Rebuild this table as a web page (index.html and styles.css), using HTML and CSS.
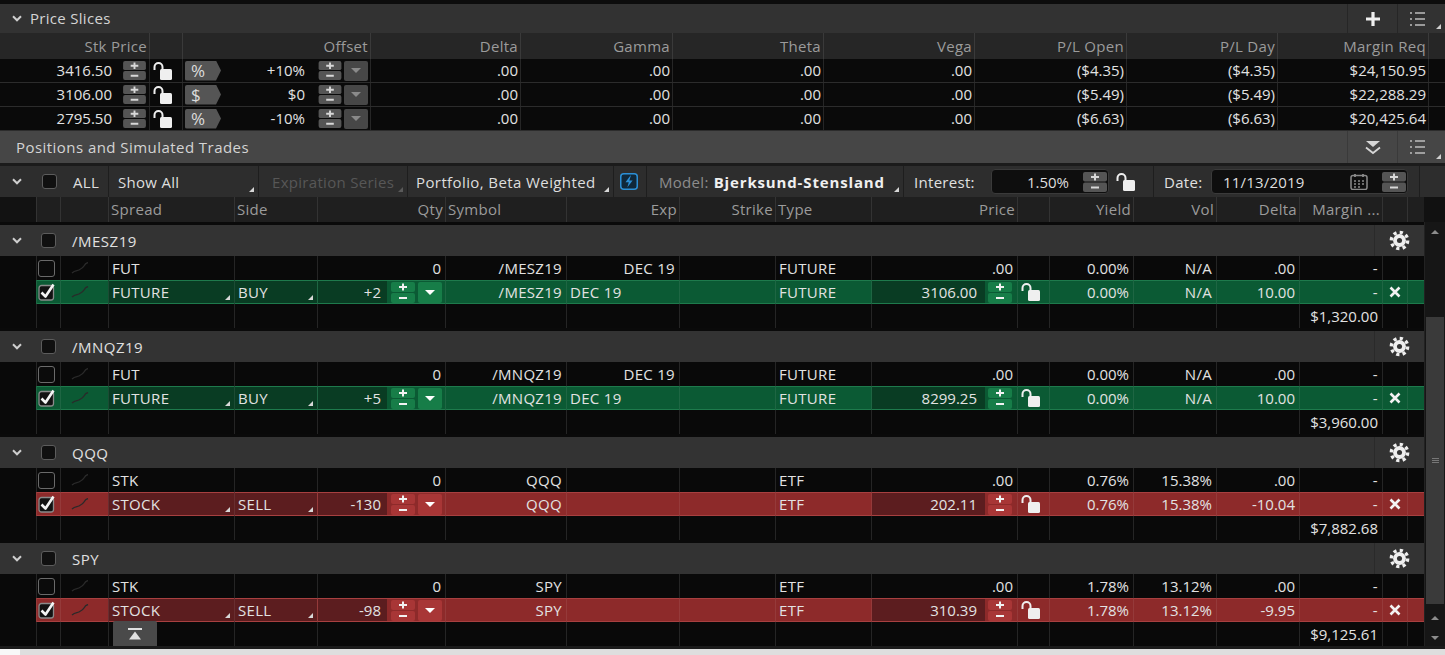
FILE: index.html
```html
<!DOCTYPE html>
<html>
<head>
<meta charset="utf-8">
<title>Price Slices</title>
<link rel="stylesheet" href="styles.css">
</head>
<body>
<div class="app">
  <div class="topband"></div>

  <div class="phead ps-head">
    <span class="chev"><svg width="10" height="7" viewBox="0 0 10 7"><path d="M1 1.3L5 5.3L9 1.3" /></svg></span>
    <span class="ptitle">Price Slices</span>
    <span class="tool plus"><svg width="18" height="18" viewBox="0 0 18 18"><path d="M9 2v14M2 9h14"/></svg></span>
    <span class="tool menu"><svg width="18" height="16" viewBox="0 0 18 16"><path d="M1 2h2M6 2h10M1 8h2M6 8h10M1 14h2M6 14h10"/></svg></span>
  </div>

  <div class="ps-grid">
    <div class="ps-row ps-hdr">
      <div class="pc r">Stk Price</div><div class="pc"></div><div class="pc r">Offset</div><div class="pc r">Delta</div><div class="pc r">Gamma</div><div class="pc r">Theta</div><div class="pc r">Vega</div><div class="pc r">P/L Open</div><div class="pc r">P/L Day</div><div class="pc r">Margin Req</div><div class="pc"></div>
    </div>
    <div class="ps-row">
      <div class="pc stk"><span class="v">3416.50</span><svg class="spin g" width="23" height="19" viewBox="0 0 24 20"><rect class="sb" x="0" y="0" width="24" height="9.5" rx="2"/><rect class="sb" x="0" y="10.5" width="24" height="9.5" rx="2"/><path class="sg" d="M8 5h8M12 1.5v7M8 15.5h8"/></svg></div>
      <div class="pc lockc"><svg class="lock" width="20" height="18" viewBox="0 0 20 18"><path d="M1.5 8V5A4 4 0 0 1 9.5 5V8"/><rect x="7" y="7" width="12" height="11" rx="1.5"/></svg></div>
      <div class="pc off"><span class="tag">%</span><span class="v">+10%</span><svg class="spin g" width="24" height="19" viewBox="0 0 24 20"><rect class="sb" x="0" y="0" width="24" height="9.5" rx="2"/><rect class="sb" x="0" y="10.5" width="24" height="9.5" rx="2"/><path class="sg" d="M8 5h8M12 1.5v7M8 15.5h8"/></svg><span class="dd g"></span></div>
      <div class="pc r">.00</div><div class="pc r">.00</div><div class="pc r">.00</div><div class="pc r">.00</div><div class="pc r">($4.35)</div><div class="pc r">($4.35)</div><div class="pc r">$24,150.95</div><div class="pc"></div>
    </div>
    <div class="ps-row">
      <div class="pc stk"><span class="v">3106.00</span><svg class="spin g" width="23" height="19" viewBox="0 0 24 20"><rect class="sb" x="0" y="0" width="24" height="9.5" rx="2"/><rect class="sb" x="0" y="10.5" width="24" height="9.5" rx="2"/><path class="sg" d="M8 5h8M12 1.5v7M8 15.5h8"/></svg></div>
      <div class="pc lockc"><svg class="lock" width="20" height="18" viewBox="0 0 20 18"><path d="M1.5 8V5A4 4 0 0 1 9.5 5V8"/><rect x="7" y="7" width="12" height="11" rx="1.5"/></svg></div>
      <div class="pc off"><span class="tag">$</span><span class="v">$0</span><svg class="spin g" width="24" height="19" viewBox="0 0 24 20"><rect class="sb" x="0" y="0" width="24" height="9.5" rx="2"/><rect class="sb" x="0" y="10.5" width="24" height="9.5" rx="2"/><path class="sg" d="M8 5h8M12 1.5v7M8 15.5h8"/></svg><span class="dd g"></span></div>
      <div class="pc r">.00</div><div class="pc r">.00</div><div class="pc r">.00</div><div class="pc r">.00</div><div class="pc r">($5.49)</div><div class="pc r">($5.49)</div><div class="pc r">$22,288.29</div><div class="pc"></div>
    </div>
    <div class="ps-row">
      <div class="pc stk"><span class="v">2795.50</span><svg class="spin g" width="23" height="19" viewBox="0 0 24 20"><rect class="sb" x="0" y="0" width="24" height="9.5" rx="2"/><rect class="sb" x="0" y="10.5" width="24" height="9.5" rx="2"/><path class="sg" d="M8 5h8M12 1.5v7M8 15.5h8"/></svg></div>
      <div class="pc lockc"><svg class="lock" width="20" height="18" viewBox="0 0 20 18"><path d="M1.5 8V5A4 4 0 0 1 9.5 5V8"/><rect x="7" y="7" width="12" height="11" rx="1.5"/></svg></div>
      <div class="pc off"><span class="tag">%</span><span class="v">-10%</span><svg class="spin g" width="24" height="19" viewBox="0 0 24 20"><rect class="sb" x="0" y="0" width="24" height="9.5" rx="2"/><rect class="sb" x="0" y="10.5" width="24" height="9.5" rx="2"/><path class="sg" d="M8 5h8M12 1.5v7M8 15.5h8"/></svg><span class="dd g"></span></div>
      <div class="pc r">.00</div><div class="pc r">.00</div><div class="pc r">.00</div><div class="pc r">.00</div><div class="pc r">($6.63)</div><div class="pc r">($6.63)</div><div class="pc r">$20,425.64</div><div class="pc"></div>
    </div>
  </div>

  <div class="phead pos-head">
    <span class="ptitle">Positions and Simulated Trades</span>
    <span class="tool collapse"><svg width="18" height="16" viewBox="0 0 18 16"><path class="f" d="M2 2H16L9 8Z"/><path class="s" d="M2 8.5L9 14L16 8.5"/></svg></span>
    <span class="tool menu"><svg width="18" height="16" viewBox="0 0 18 16"><path d="M1 2h2M6 2h10M1 8h2M6 8h10M1 14h2M6 14h10"/></svg></span>
  </div>

  <div class="toolbar">
    <div class="tb tb-sel">
      <span class="chev"><svg width="10" height="7" viewBox="0 0 10 7"><path d="M1 1.3L5 5.3L9 1.3" /></svg></span>
      <span class="cb"></span>
      <span class="tb-all">ALL</span>
    </div>
    <div class="tb tb-show drop">Show All</div>
    <div class="tb tb-exp drop dis">Expiration Series</div>
    <div class="tb tb-port drop">Portfolio, Beta Weighted</div>
    <div class="tb tb-bolt"><svg width="18" height="17" viewBox="0 0 18 17"><rect x="0.75" y="0.75" width="16.5" height="15.5" rx="3"/><path d="M10.5 2.5L5.5 9.3H8.8L7.3 14.5L12.6 7.4H9.3L10.9 2.5Z"/></svg></div>
    <div class="tb tb-model drop"><span class="lbl">Model:</span><b>Bjerksund-Stensland</b></div>
    <div class="tb tb-int">
      <span class="lbl2 li">Interest:</span>
      <span class="inp int-inp"><span class="iv">1.50%</span><svg class="spin g" width="24" height="20" viewBox="0 0 24 20"><rect class="sb" x="0" y="0" width="24" height="9.5" rx="2"/><rect class="sb" x="0" y="10.5" width="24" height="9.5" rx="2"/><path class="sg" d="M8 5h8M12 1.5v7M8 15.5h8"/></svg></span>
      <svg class="lock" width="20" height="18" viewBox="0 0 20 18"><path d="M1.5 8V5A4 4 0 0 1 9.5 5V8"/><rect x="7" y="7" width="12" height="11" rx="1.5"/></svg>
    </div>
    <div class="tb tb-date">
      <span class="lbl2 ld">Date:</span>
      <span class="inp date-inp"><span class="dv">11/13/2019</span><svg class="cal" width="18" height="17" viewBox="0 0 18 17"><rect x="1" y="2.5" width="16" height="14" rx="2"/><path class="ring" d="M5 1v3M13 1v3"/><path class="grid" d="M4 8h2M8 8h2M12 8h2M4 11h2M8 11h2M12 11h2M4 14h2M8 14h2"/></svg><svg class="spin g" width="24" height="20" viewBox="0 0 24 20"><rect class="sb" x="0" y="0" width="24" height="9.5" rx="2"/><rect class="sb" x="0" y="10.5" width="24" height="9.5" rx="2"/><path class="sg" d="M8 5h8M12 1.5v7M8 15.5h8"/></svg></span>
    </div>
    <div class="tb tb-rest"></div>
  </div>

  <div class="pos-body">
    <div class="pos-main">
      <div class="row hdr">
        <div class="c c0"></div><div class="c"></div><div class="c"></div><div class="c">Spread</div><div class="c">Side</div><div class="c r">Qty</div><div class="c">Symbol</div><div class="c r">Exp</div><div class="c r">Strike</div><div class="c">Type</div><div class="c r">Price</div><div class="c"></div><div class="c r">Yield</div><div class="c r">Vol</div><div class="c r">Delta</div><div class="c r">Margin ...</div><div class="c"></div><div class="c"></div>
      </div>

      <!-- /MESZ19 -->
      <div class="grp">
        <div class="ghead">
          <span class="chev"><svg width="10" height="7" viewBox="0 0 10 7"><path d="M1 1.3L5 5.3L9 1.3" /></svg></span>
          <span class="cb"></span><span class="gname">/MESZ19</span>
          <span class="gear"><svg width="21" height="21" viewBox="0 0 20 20"><circle class="teeth" cx="10" cy="10" r="7.8"/><circle class="body" cx="10" cy="10" r="6.1"/><circle class="hole" cx="10" cy="10" r="2.4"/></svg></span>
        </div>
        <div class="row">
          <div class="c c0"></div><div class="c cbc"><span class="cb lg"></span></div><div class="c chart"><svg width="18" height="12" viewBox="0 0 18 12"><path d="M1 11C4 8 6 9 8 8S12 6 13 4S15 1 17 0.5"/></svg></div>
          <div class="c">FUT</div><div class="c"></div><div class="c r n">0</div><div class="c r">/MESZ19</div><div class="c r">DEC 19</div><div class="c"></div><div class="c">FUTURE</div><div class="c r n">.00</div><div class="c"></div><div class="c r n">0.00%</div><div class="c r">N/A</div><div class="c r n">.00</div><div class="c r">-</div><div class="c"></div><div class="c"></div>
        </div>
        <div class="row trade buy">
          <div class="c c0"></div><div class="c cbc"><svg class="chk" width="18" height="18" viewBox="0 0 18 18"><rect x="1" y="2.5" width="14.5" height="14.5" rx="2.5"/><path d="M3.5 9.5L7.5 13.5L15.5 1.5"/></svg></div><div class="c chart"><svg width="18" height="12" viewBox="0 0 18 12"><path d="M1 11C4 8 6 9 8 8S12 6 13 4S15 1 17 0.5"/></svg></div>
          <div class="c ed drop">FUTURE</div><div class="c ed drop">BUY</div>
          <div class="c qty n"><span class="fld">+2</span><svg class="spin" width="24" height="21" viewBox="0 0 24 21"><rect class="sb" x="0" y="0" width="24" height="10" rx="2"/><rect class="sb" x="0" y="11" width="24" height="10" rx="2"/><path class="sg" d="M8 5h8M12 1.5v7M8 16h8"/></svg><span class="dd"></span></div>
          <div class="c r">/MESZ19</div><div class="c">DEC 19</div><div class="c"></div><div class="c">FUTURE</div>
          <div class="c price n"><span class="fld">3106.00</span><svg class="spin" width="24" height="21" viewBox="0 0 24 21"><rect class="sb" x="0" y="0" width="24" height="10" rx="2"/><rect class="sb" x="0" y="11" width="24" height="10" rx="2"/><path class="sg" d="M8 5h8M12 1.5v7M8 16h8"/></svg></div>
          <div class="c lockc"><svg class="lock" width="20" height="18" viewBox="0 0 20 18"><path d="M1.5 8V5A4 4 0 0 1 9.5 5V8"/><rect x="7" y="7" width="12" height="11" rx="1.5"/></svg></div>
          <div class="c r n">0.00%</div><div class="c r">N/A</div><div class="c r n">10.00</div><div class="c r">-</div>
          <div class="c xc"><svg width="12" height="12" viewBox="0 0 12 12"><path d="M1.5 1.5L10.5 10.5M10.5 1.5L1.5 10.5"/></svg></div><div class="c"></div>
        </div>
        <div class="row">
          <div class="c c0"></div><div class="c"></div><div class="c"></div><div class="c"></div><div class="c"></div><div class="c"></div><div class="c"></div><div class="c"></div><div class="c"></div><div class="c"></div><div class="c"></div><div class="c"></div><div class="c"></div><div class="c"></div><div class="c"></div><div class="c r n">$1,320.00</div><div class="c"></div><div class="c"></div>
        </div>
      </div>

      <!-- /MNQZ19 -->
      <div class="grp">
        <div class="ghead">
          <span class="chev"><svg width="10" height="7" viewBox="0 0 10 7"><path d="M1 1.3L5 5.3L9 1.3" /></svg></span>
          <span class="cb"></span><span class="gname">/MNQZ19</span>
          <span class="gear"><svg width="21" height="21" viewBox="0 0 20 20"><circle class="teeth" cx="10" cy="10" r="7.8"/><circle class="body" cx="10" cy="10" r="6.1"/><circle class="hole" cx="10" cy="10" r="2.4"/></svg></span>
        </div>
        <div class="row">
          <div class="c c0"></div><div class="c cbc"><span class="cb lg"></span></div><div class="c chart"><svg width="18" height="12" viewBox="0 0 18 12"><path d="M1 11C4 8 6 9 8 8S12 6 13 4S15 1 17 0.5"/></svg></div>
          <div class="c">FUT</div><div class="c"></div><div class="c r n">0</div><div class="c r">/MNQZ19</div><div class="c r">DEC 19</div><div class="c"></div><div class="c">FUTURE</div><div class="c r n">.00</div><div class="c"></div><div class="c r n">0.00%</div><div class="c r">N/A</div><div class="c r n">.00</div><div class="c r">-</div><div class="c"></div><div class="c"></div>
        </div>
        <div class="row trade buy">
          <div class="c c0"></div><div class="c cbc"><svg class="chk" width="18" height="18" viewBox="0 0 18 18"><rect x="1" y="2.5" width="14.5" height="14.5" rx="2.5"/><path d="M3.5 9.5L7.5 13.5L15.5 1.5"/></svg></div><div class="c chart"><svg width="18" height="12" viewBox="0 0 18 12"><path d="M1 11C4 8 6 9 8 8S12 6 13 4S15 1 17 0.5"/></svg></div>
          <div class="c ed drop">FUTURE</div><div class="c ed drop">BUY</div>
          <div class="c qty n"><span class="fld">+5</span><svg class="spin" width="24" height="21" viewBox="0 0 24 21"><rect class="sb" x="0" y="0" width="24" height="10" rx="2"/><rect class="sb" x="0" y="11" width="24" height="10" rx="2"/><path class="sg" d="M8 5h8M12 1.5v7M8 16h8"/></svg><span class="dd"></span></div>
          <div class="c r">/MNQZ19</div><div class="c">DEC 19</div><div class="c"></div><div class="c">FUTURE</div>
          <div class="c price n"><span class="fld">8299.25</span><svg class="spin" width="24" height="21" viewBox="0 0 24 21"><rect class="sb" x="0" y="0" width="24" height="10" rx="2"/><rect class="sb" x="0" y="11" width="24" height="10" rx="2"/><path class="sg" d="M8 5h8M12 1.5v7M8 16h8"/></svg></div>
          <div class="c lockc"><svg class="lock" width="20" height="18" viewBox="0 0 20 18"><path d="M1.5 8V5A4 4 0 0 1 9.5 5V8"/><rect x="7" y="7" width="12" height="11" rx="1.5"/></svg></div>
          <div class="c r n">0.00%</div><div class="c r">N/A</div><div class="c r n">10.00</div><div class="c r">-</div>
          <div class="c xc"><svg width="12" height="12" viewBox="0 0 12 12"><path d="M1.5 1.5L10.5 10.5M10.5 1.5L1.5 10.5"/></svg></div><div class="c"></div>
        </div>
        <div class="row">
          <div class="c c0"></div><div class="c"></div><div class="c"></div><div class="c"></div><div class="c"></div><div class="c"></div><div class="c"></div><div class="c"></div><div class="c"></div><div class="c"></div><div class="c"></div><div class="c"></div><div class="c"></div><div class="c"></div><div class="c"></div><div class="c r n">$3,960.00</div><div class="c"></div><div class="c"></div>
        </div>
      </div>

      <!-- QQQ -->
      <div class="grp">
        <div class="ghead">
          <span class="chev"><svg width="10" height="7" viewBox="0 0 10 7"><path d="M1 1.3L5 5.3L9 1.3" /></svg></span>
          <span class="cb"></span><span class="gname">QQQ</span>
          <span class="gear"><svg width="21" height="21" viewBox="0 0 20 20"><circle class="teeth" cx="10" cy="10" r="7.8"/><circle class="body" cx="10" cy="10" r="6.1"/><circle class="hole" cx="10" cy="10" r="2.4"/></svg></span>
        </div>
        <div class="row">
          <div class="c c0"></div><div class="c cbc"><span class="cb lg"></span></div><div class="c chart"><svg width="18" height="12" viewBox="0 0 18 12"><path d="M1 11C4 8 6 9 8 8S12 6 13 4S15 1 17 0.5"/></svg></div>
          <div class="c">STK</div><div class="c"></div><div class="c r n">0</div><div class="c r">QQQ</div><div class="c"></div><div class="c"></div><div class="c">ETF</div><div class="c r n">.00</div><div class="c"></div><div class="c r n">0.76%</div><div class="c r n">15.38%</div><div class="c r n">.00</div><div class="c r">-</div><div class="c"></div><div class="c"></div>
        </div>
        <div class="row trade sell">
          <div class="c c0"></div><div class="c cbc"><svg class="chk" width="18" height="18" viewBox="0 0 18 18"><rect x="1" y="2.5" width="14.5" height="14.5" rx="2.5"/><path d="M3.5 9.5L7.5 13.5L15.5 1.5"/></svg></div><div class="c chart"><svg width="18" height="12" viewBox="0 0 18 12"><path d="M1 11C4 8 6 9 8 8S12 6 13 4S15 1 17 0.5"/></svg></div>
          <div class="c ed drop">STOCK</div><div class="c ed drop">SELL</div>
          <div class="c qty n"><span class="fld">-130</span><svg class="spin" width="24" height="21" viewBox="0 0 24 21"><rect class="sb" x="0" y="0" width="24" height="10" rx="2"/><rect class="sb" x="0" y="11" width="24" height="10" rx="2"/><path class="sg" d="M8 5h8M12 1.5v7M8 16h8"/></svg><span class="dd"></span></div>
          <div class="c r">QQQ</div><div class="c"></div><div class="c"></div><div class="c">ETF</div>
          <div class="c price n"><span class="fld">202.11</span><svg class="spin" width="24" height="21" viewBox="0 0 24 21"><rect class="sb" x="0" y="0" width="24" height="10" rx="2"/><rect class="sb" x="0" y="11" width="24" height="10" rx="2"/><path class="sg" d="M8 5h8M12 1.5v7M8 16h8"/></svg></div>
          <div class="c lockc"><svg class="lock" width="20" height="18" viewBox="0 0 20 18"><path d="M1.5 8V5A4 4 0 0 1 9.5 5V8"/><rect x="7" y="7" width="12" height="11" rx="1.5"/></svg></div>
          <div class="c r n">0.76%</div><div class="c r n">15.38%</div><div class="c r n">-10.04</div><div class="c r">-</div>
          <div class="c xc"><svg width="12" height="12" viewBox="0 0 12 12"><path d="M1.5 1.5L10.5 10.5M10.5 1.5L1.5 10.5"/></svg></div><div class="c"></div>
        </div>
        <div class="row">
          <div class="c c0"></div><div class="c"></div><div class="c"></div><div class="c"></div><div class="c"></div><div class="c"></div><div class="c"></div><div class="c"></div><div class="c"></div><div class="c"></div><div class="c"></div><div class="c"></div><div class="c"></div><div class="c"></div><div class="c"></div><div class="c r n">$7,882.68</div><div class="c"></div><div class="c"></div>
        </div>
      </div>

      <!-- SPY -->
      <div class="grp">
        <div class="ghead">
          <span class="chev"><svg width="10" height="7" viewBox="0 0 10 7"><path d="M1 1.3L5 5.3L9 1.3" /></svg></span>
          <span class="cb"></span><span class="gname">SPY</span>
          <span class="gear"><svg width="21" height="21" viewBox="0 0 20 20"><circle class="teeth" cx="10" cy="10" r="7.8"/><circle class="body" cx="10" cy="10" r="6.1"/><circle class="hole" cx="10" cy="10" r="2.4"/></svg></span>
        </div>
        <div class="row">
          <div class="c c0"></div><div class="c cbc"><span class="cb lg"></span></div><div class="c chart"><svg width="18" height="12" viewBox="0 0 18 12"><path d="M1 11C4 8 6 9 8 8S12 6 13 4S15 1 17 0.5"/></svg></div>
          <div class="c">STK</div><div class="c"></div><div class="c r n">0</div><div class="c r">SPY</div><div class="c"></div><div class="c"></div><div class="c">ETF</div><div class="c r n">.00</div><div class="c"></div><div class="c r n">1.78%</div><div class="c r n">13.12%</div><div class="c r n">.00</div><div class="c r">-</div><div class="c"></div><div class="c"></div>
        </div>
        <div class="row trade sell">
          <div class="c c0"></div><div class="c cbc"><svg class="chk" width="18" height="18" viewBox="0 0 18 18"><rect x="1" y="2.5" width="14.5" height="14.5" rx="2.5"/><path d="M3.5 9.5L7.5 13.5L15.5 1.5"/></svg></div><div class="c chart"><svg width="18" height="12" viewBox="0 0 18 12"><path d="M1 11C4 8 6 9 8 8S12 6 13 4S15 1 17 0.5"/></svg></div>
          <div class="c ed drop">STOCK</div><div class="c ed drop">SELL</div>
          <div class="c qty n"><span class="fld">-98</span><svg class="spin" width="24" height="21" viewBox="0 0 24 21"><rect class="sb" x="0" y="0" width="24" height="10" rx="2"/><rect class="sb" x="0" y="11" width="24" height="10" rx="2"/><path class="sg" d="M8 5h8M12 1.5v7M8 16h8"/></svg><span class="dd"></span></div>
          <div class="c r">SPY</div><div class="c"></div><div class="c"></div><div class="c">ETF</div>
          <div class="c price n"><span class="fld">310.39</span><svg class="spin" width="24" height="21" viewBox="0 0 24 21"><rect class="sb" x="0" y="0" width="24" height="10" rx="2"/><rect class="sb" x="0" y="11" width="24" height="10" rx="2"/><path class="sg" d="M8 5h8M12 1.5v7M8 16h8"/></svg></div>
          <div class="c lockc"><svg class="lock" width="20" height="18" viewBox="0 0 20 18"><path d="M1.5 8V5A4 4 0 0 1 9.5 5V8"/><rect x="7" y="7" width="12" height="11" rx="1.5"/></svg></div>
          <div class="c r n">1.78%</div><div class="c r n">13.12%</div><div class="c r n">-9.95</div><div class="c r">-</div>
          <div class="c xc"><svg width="12" height="12" viewBox="0 0 12 12"><path d="M1.5 1.5L10.5 10.5M10.5 1.5L1.5 10.5"/></svg></div><div class="c"></div>
        </div>
        <div class="row">
          <div class="c c0"></div><div class="c"></div><div class="c"></div><div class="c"></div><div class="c"></div><div class="c"></div><div class="c"></div><div class="c"></div><div class="c"></div><div class="c"></div><div class="c"></div><div class="c"></div><div class="c"></div><div class="c"></div><div class="c"></div><div class="c r n">$9,125.61</div><div class="c"></div><div class="c"></div>
        </div>
      </div>

      <span class="totop"><svg width="14" height="12" viewBox="0 0 14 12"><rect x="0" y="0" width="14" height="2"/><path d="M7 3.5L13 11.5H1Z"/></svg></span>
    </div>

    <div class="vscroll">
      <div class="vs-head"></div>
      <div class="vs-track">
        <span class="arr up a1"></span>
        <div class="thumb"><span class="grip"></span></div>
        <span class="arr up a2"></span>
        <span class="arr down a3"></span>
      </div>
    </div>
  </div>

  <div class="bottom-dark"></div>
  <div class="bottom-strip"><span class="bs-left"></span></div>
</div>
</body>
</html>
```

FILE: styles.css
```css
* { box-sizing: border-box; margin: 0; padding: 0; }

body {
  margin: 0;
  background: #0a0a0a;
  font-family: "Open Sans", "Noto Sans", sans-serif;
  font-size: 15px;
  letter-spacing: 0.3px;
  color: #e2e2e2;
  overflow: hidden;
}

.app {
  width: 1445px;
  height: 655px;
  overflow: hidden;
  background: #0a0a0a;
  position: relative;
}

.topband { height: 4px; background: #0c0c0c; }

/* panel headers */
.phead {
  display: flex;
  align-items: stretch;
  color: #d4d4d4;
}
.ps-head { height: 29px; background: #323232; }
.pos-head {
  height: 35px;
  background: #464646;
  border-bottom: 3px solid #1b1b1b;
}
.ptitle { line-height: 29px; flex: 1; }
.ps-head .ptitle { padding-left: 8px; }
.pos-head .ptitle { padding-left: 16px; line-height: 32px; letter-spacing: 0.45px; }

.chev { display: inline-flex; align-items: center; }
.chev svg path { fill: none; stroke: #cfcfcf; stroke-width: 2; }
.ps-head .chev { padding-left: 12px; }

.tool {
  display: flex;
  align-items: center;
  justify-content: center;
  border-left: 1px solid #262626;
  position: relative;
}
.pos-head .tool { border-left-color: #3a3a3a; }
.tool.plus, .tool.collapse { width: 50px; }
.tool.menu { width: 48px; padding-right: 8px; }
.tool.plus svg path { stroke: #f0f0f0; stroke-width: 3.2; fill: none; }
.tool.menu svg path { stroke: #bdbdbd; stroke-width: 1.6; fill: none; }
.tool.menu::after {
  content: "";
  position: absolute;
  right: 4px;
  bottom: 4px;
  border-style: solid;
  border-width: 0 0 5px 5px;
  border-color: transparent transparent #cfcfcf transparent;
}
.tool.collapse .f { fill: #d6d6d6; }
.tool.collapse .s { fill: none; stroke: #d6d6d6; stroke-width: 1.8; }

/* price slices grid */
.ps-grid { background: #0a0a0a; }
.ps-row {
  display: grid;
  grid-template-columns: 150px 33px 188px 150px 152px 151px 151px 152px 151px 151px 16px;
  height: 24px;
  border-bottom: 1px solid #2c2c2c;
}
.ps-row.ps-hdr {
  height: 26px;
  background: #262626;
  color: #9b9b9b;
  border-bottom: none;
}
.pc {
  line-height: 23px;
  padding: 0 2px;
  white-space: nowrap;
  border-right: 1px solid #262626;
  display: flex;
  align-items: center;
  letter-spacing: 0;
}
.ps-hdr .pc { line-height: 26px; border-right-color: #3a3a3a; letter-spacing: 0.3px; }
.pc.r { justify-content: flex-end; }
.pc:last-child { border-right: none; }
.pc .v { flex: 1; text-align: right; }

.pc.stk { padding: 0 3px 0 0; }
.pc.stk .spin { margin-left: 11px; }
.pc.lockc { padding-left: 3px; }
.pc.off { padding: 0 2px 0 2px; }
.pc.off .spin { margin-left: 13px; }

.tag {
  width: 36px;
  height: 20px;
  background: #555;
  color: #dcdcdc;
  font-size: 17px;
  line-height: 20px;
  padding-left: 6px;
  clip-path: polygon(0 0, 31px 0, 36px 50%, 31px 100%, 0 100%);
  border-radius: 2px 0 0 2px;
}

/* spinners */
.spin { flex: none; display: block; }
.spin .sg { stroke: #f2f2f2; stroke-width: 2; fill: none; }
.spin.g .sb { fill: #555; }
.spin.g .sg { stroke: #d8d8d8; }

.dd {
  flex: none;
  width: 24px;
  height: 21px;
  border-radius: 2px;
  display: flex;
  align-items: center;
  justify-content: center;
}
.dd::after {
  content: "";
  border-style: solid;
  border-width: 5px 5px 0 5px;
  border-color: #fff transparent transparent transparent;
}
.dd.g { background: #474747; height: 20px; margin-left: 2px; }
.dd.g::after { border-top-color: #8a8a8a; }

.lock { flex: none; display: block; }
.lock path { fill: none; stroke: #efefef; stroke-width: 2; }
.lock rect { fill: #efefef; }

/* toolbar */
.toolbar {
  display: flex;
  height: 31px;
  background: #2d2d2d;
  color: #dedede;
}
.tb {
  display: flex;
  align-items: center;
  border-left: 1px solid #1e1e1e;
  position: relative;
  white-space: nowrap;
}
.tb-sel { width: 108px; border-left: none; padding-left: 12px; }
.tb-sel .cb { margin-left: 20px; }
.tb-all { margin-left: 16px; }
.tb-show { width: 150px; padding-left: 9px; }
.tb-exp { width: 149px; padding-left: 13px; color: #575757; }
.tb-port { width: 206px; padding-left: 8px; letter-spacing: 0.4px; }
.tb-bolt { width: 33px; padding-left: 6px; }
.tb-bolt rect { fill: #10283a; stroke: #2c8fd6; stroke-width: 1.5; }
.tb-bolt path { fill: #2c8fd6; }
.tb-model { width: 257px; padding-left: 12px; }
.tb-model .lbl { color: #8c8c8c; margin-right: 5px; }
.tb-model b { color: #f0f0f0; font-weight: 700; letter-spacing: 0.85px; }
.tb-int { width: 250px; padding-left: 10px; }
.tb-int .lock { margin-left: 7px; }
.tb-date { width: 266px; padding-left: 10px; }
.tb-rest { flex: 1; }
.lbl2 { color: #e0e0e0; flex: none; }
.lbl2.li { width: 77px; }
.lbl2.ld { width: 47px; }

.drop::after {
  content: "";
  position: absolute;
  right: 4px;
  bottom: 5px;
  border-style: solid;
  border-width: 0 0 5px 5px;
  border-color: transparent transparent #d6d6d6 transparent;
}
.drop.dis::after { border-bottom-color: #5a5a5a; }

.inp {
  display: flex;
  align-items: center;
  height: 25px;
  background: #0e0e0e;
  border: 1px solid #3a3a3a;
  border-radius: 4px;
  letter-spacing: 0;
}
.int-inp { width: 118px; padding-right: 1px; }
.int-inp .iv { flex: 1; text-align: right; padding-right: 14px; }
.date-inp { width: 197px; padding-left: 11px; padding-right: 1px; }
.date-inp .dv { flex: 1; letter-spacing: 0.2px; }
.date-inp .cal { margin-right: 14px; }
.cal rect { fill: none; stroke: #8a8a8a; stroke-width: 1.5; }
.cal .ring { stroke: #8a8a8a; stroke-width: 1.8; }
.cal .grid { stroke: #8a8a8a; stroke-width: 1.6; }

/* checkboxes */
.cb {
  display: inline-block;
  flex: none;
  width: 15px;
  height: 15px;
  border: 1px solid #5c5c5c;
  border-radius: 3px;
  background: #101010;
}
.cb.lg {
  width: 17px;
  height: 17px;
  border-color: #6a6a6a;
  background: #0b0b0b;
}
.chk rect { fill: #121212; stroke: #8a8a8a; stroke-width: 1.3; }
.chk path { fill: none; stroke: #f4f4f4; stroke-width: 2.6; stroke-linejoin: round; }

/* positions */
.pos-body { display: flex; height: 449px; }
.pos-main { width: 1424px; position: relative; }

.row {
  display: grid;
  grid-template-columns: 36px 24px 48px 126px 83px 128px 121px 113px 96px 96px 146px 32px 84px 83px 83px 83px 25px 17px;
  height: 24px;
  background: #090909;
}
.row.hdr {
  height: 25px;
  background: #1f1f1f;
  color: #9b9b9b;
}
.c {
  border-left: 1px solid #252525;
  line-height: 23px;
  padding: 0 4px 0 3px;
  white-space: nowrap;
  overflow: hidden;
  display: flex;
  align-items: center;
  position: relative;
}
.c.n { letter-spacing: 0; }
.c.r { justify-content: flex-end; }
.c0 { border-left: none; }
.hdr .c { line-height: 25px; padding: 0 2px; border-left-color: #333; }
.hdr .c0 { background: #121212; }

.cbc { padding: 0 0 0 1px; }
.chart { justify-content: center; padding: 0 10px 0 0; }
.chart svg path { fill: none; stroke: #2a2a2a; stroke-width: 1.3; }

.grp { margin-top: 3px; }
.ghead {
  display: flex;
  align-items: center;
  height: 31px;
  background: #333;
  padding-left: 12px;
}
.ghead .cb { margin-left: 19px; }
.gname { margin-left: 16px; color: #e0e0e0; letter-spacing: 0.5px; }
.gear {
  margin-left: auto;
  width: 50px;
  height: 31px;
  border-left: 1px solid #2a2a2a;
  display: flex;
  align-items: center;
  justify-content: center;
}
.gear .teeth { fill: none; stroke: #efefef; stroke-width: 3.2; stroke-dasharray: 3.06 3.06; }
.gear .body { fill: #efefef; }
.gear .hole { fill: #333; }

/* trade rows */
.trade .c:not(.c0) { border-left-color: rgba(255,255,255,0.08); }
.buy .c:not(.c0) { background: #0b5a34; box-shadow: inset 0 1px 0 #1e7a4c, inset 0 -1px 0 #1e7a4c; }
.sell .c:not(.c0) { background: #8d2a2a; box-shadow: inset 0 1px 0 #a84040, inset 0 -1px 0 #a84040; }
.buy .c.ed, .buy .fld { background: #093c23; }
.sell .c.ed, .sell .fld { background: #5c1d1f; }
.buy .spin .sb, .buy .dd { fill: #177d48; background: #177d48; }
.sell .spin .sb, .sell .dd { fill: #a83636; background: #a83636; }

.c.ed.drop::after { right: 4px; bottom: 4px; border-bottom-color: #d8d8d8; }

.c.qty { padding: 0 3px 0 0; }
.c.price { padding: 0 5px 0 0; }
.fld {
  flex: 1;
  align-self: stretch;
  text-align: right;
  margin: 1px 0;
  line-height: 22px;
}
.qty .fld { padding-right: 6px; }
.qty .spin { margin-left: 4px; }
.qty .dd { margin-left: 3px; }
.price .fld { padding-right: 8px; }
.price .spin { margin-left: 3px; }
.c.lockc { padding-left: 3px; }

.xc { justify-content: center; padding: 0; }
.xc svg path { stroke: #f2f2f2; stroke-width: 2.6; fill: none; }

.totop {
  position: absolute;
  left: 113px;
  bottom: 0;
  width: 44px;
  height: 25px;
  background: #4a4a4a;
  border-radius: 2px 2px 0 0;
  display: flex;
  align-items: center;
  justify-content: center;
}
.totop rect, .totop path { fill: #e0e0e0; }

/* scrollbar */
.vscroll { width: 21px; display: flex; flex-direction: column; background: #141414; }
.vs-head { height: 25px; background: #111; }
.vs-track { flex: 1; position: relative; background: #161616; border-left: 1px solid #222; }
.arr {
  position: absolute;
  left: 6px;
  border-style: solid;
}
.arr.up { border-width: 0 4px 4px 4px; border-color: transparent transparent #8c8c8c transparent; }
.arr.down { border-width: 4px 4px 0 4px; border-color: #8c8c8c transparent transparent transparent; }
.a1 { top: 8px; }
.a2 { top: 394px; }
.a3 { top: 414px; }
.thumb {
  position: absolute;
  left: 1px;
  right: 1px;
  top: 95px;
  height: 287px;
  background: #3a3a3a;
  display: flex;
  align-items: center;
  justify-content: center;
}
.grip {
  width: 7px;
  height: 5px;
  border-top: 1px solid #777;
  border-bottom: 1px solid #777;
  position: relative;
}
.grip::after {
  content: "";
  position: absolute;
  left: 0;
  right: 0;
  top: 1px;
  border-top: 1px solid #777;
}

.bottom-dark { height: 3px; background: #1b1b1b; }
.bottom-strip { height: 6px; background: #dedede; display: flex; }
.bs-left { width: 20px; background: #f8f8f8; }
```
